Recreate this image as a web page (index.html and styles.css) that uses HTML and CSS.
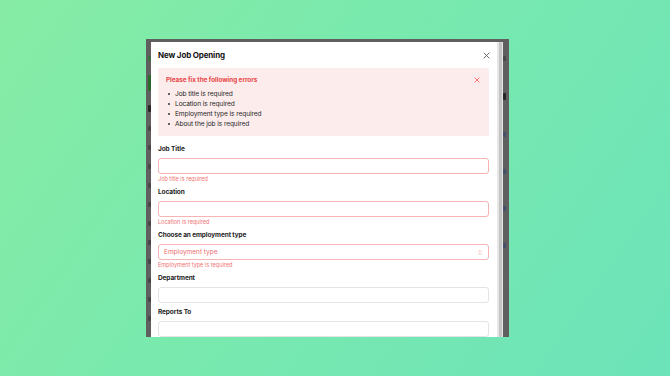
FILE: index.html
```html
<!DOCTYPE html>
<html lang="en">
<head>
<meta charset="utf-8">
<title>New Job Opening</title>
<link rel="stylesheet" href="styles.css">
</head>
<body>
<div class="stage">
  <div class="frame">
    <div class="backdrop-strip left">
      <span class="frag s1 g"></span>
      <span class="frag btn"></span>
      <span class="frag s2 b"></span>
      <span class="frag s1"></span>
      <span class="frag s1"></span>
      <span class="frag s1"></span>
      <span class="frag s1"></span>
      <span class="frag s1"></span>
      <span class="frag s1"></span>
      <span class="frag s1"></span>
      <span class="frag s1"></span>
      <span class="frag s1"></span>
      <span class="frag s1"></span>
      <span class="frag s1"></span>
    </div>
    <div class="modal">
      <div class="modal-header">
        <h1 class="modal-title">New Job Opening</h1>
        <svg class="close" viewBox="0 0 10 10" width="7" height="7"><path d="M1 1L9 9M9 1L1 9" stroke="#5b5b5b" stroke-width="1.3" fill="none"/></svg>
      </div>
      <div class="alert">
        <div class="alert-head">
          <span class="alert-title">Please fix the following errors</span>
          <svg class="alert-close" viewBox="0 0 10 10" width="6" height="6"><path d="M1 1L9 9M9 1L1 9" stroke="#ec5b5b" stroke-width="1.4" fill="none"/></svg>
        </div>
        <ul class="alert-list">
          <li>Job title is required</li>
          <li>Location is required</li>
          <li>Employment type is required</li>
          <li>About the job is required</li>
        </ul>
      </div>
      <div class="field">
        <label class="label">Job Title</label>
        <div class="input invalid"></div>
        <div class="err">Job title is required</div>
      </div>
      <div class="field">
        <label class="label">Location</label>
        <div class="input invalid"></div>
        <div class="err">Location is required</div>
      </div>
      <div class="field">
        <label class="label">Choose an employment type</label>
        <div class="input invalid select">
          <span class="placeholder">Employment type</span>
          <svg class="arrows" viewBox="0 0 6 10" width="4" height="7"><path d="M1 4L3 2L5 4M1 6L3 8L5 6" stroke="#ef8a8a" stroke-width="1" fill="none"/></svg>
        </div>
        <div class="err">Employment type is required</div>
      </div>
      <div class="field">
        <label class="label">Department</label>
        <div class="input"></div>
      </div>
      <div class="field">
        <label class="label">Reports To</label>
        <div class="input"></div>
      </div>
    </div>
    <div class="scrollbar"><div class="thumb"></div></div>
    <div class="backdrop-strip right">
      <span class="frag s1"></span>
      <span class="frag s2 b"></span>
      <span class="frag s1 lnk"></span>
      <span class="frag s1 lnk"></span>
      <span class="frag s1 lnk"></span>
      <span class="frag s1 lnk"></span>
    </div>
  </div>
</div>
</body>
</html>
```
FILE: styles.css
```css
* { box-sizing: border-box; margin: 0; padding: 0; }
html, body { width: 670px; height: 376px; overflow: hidden; }
body {
  font-family: "Inter", "Liberation Sans", sans-serif;
  background: linear-gradient(125deg, #86eca5 0%, #79e9ae 45%, #6ce3b9 100%);
}
.stage {
  padding: 39px 0 0 146px;
}
.frame {
  width: 363px;
  height: 298px;
  background: #5f5f5f;
  display: flex;
  padding-top: 3px;
  overflow: hidden;
}
.backdrop-strip {
  width: 5px;
  display: flex;
  flex-direction: column;
  gap: 14px;
  padding-top: 14px;
  overflow: hidden;
  flex: none;
}
.backdrop-strip.left { align-items: flex-end; }
.backdrop-strip.right { width: 6px; padding-top: 14px; gap: 32px; }
.frag { display: block; height: 5px; width: 3px; background: #474747; border-radius: 1px; }
.frag.s2 { height: 7px; width: 3px; }
.frag.g { background: #3d6e3d; }
.frag.btn { width: 3px; height: 16px; background: #2c6a2c; }
.frag.b { background: #262626; }
.frag.lnk { background: #44506a; }
.modal {
  width: 346px;
  background: #fff;
  padding: 0 8px 0 7px;
  overflow: hidden;
  flex: none;
}
.modal-header {
  display: flex;
  align-items: center;
  justify-content: space-between;
  height: 26px;
}
.modal-title {
  font-size: 8px;
  font-weight: 700;
  color: #141414;
  letter-spacing: -0.15px;
}
.close { display: block; margin-right: -1px; }
.alert {
  background: #fcecec;
  border-radius: 2px;
  padding: 7px 8px 7px 8px;
  height: 68px;
}
.alert-head {
  display: flex;
  align-items: center;
  justify-content: space-between;
  height: 10px;
  padding-right: 1px;
}
.alert-title {
  font-size: 6.4px;
  font-weight: 700;
  color: #e94848;
  letter-spacing: -0.05px;
}
.alert-list {
  list-style: none;
  margin-top: 4px;
  padding-left: 2px;
  font-size: 6.6px;
  color: #262626;
  line-height: 10px;
  letter-spacing: -0.1px;
}
.alert-list li { display: flex; align-items: center; }
.alert-list li::before {
  content: "";
  width: 2px;
  height: 2px;
  border-radius: 50%;
  background: #333;
  margin-right: 5px;
  flex: none;
}
.field { margin-top: 8px; }
.field + .field { margin-top: 4px; }
.label {
  display: block;
  font-size: 6.5px;
  font-weight: 700;
  color: #1e1e1e;
  line-height: 10px;
  margin-bottom: 4px;
  letter-spacing: -0.1px;
}
.input {
  height: 16px;
  border: 1px solid #e4e4e4;
  border-radius: 3px;
  background: #fff;
}
.input.invalid { border-color: #f5b3b3; }
.select {
  display: flex;
  align-items: center;
  justify-content: space-between;
  padding: 0 6px 0 5px;
}
.placeholder { font-size: 6.5px; color: #ef6e6e; }
.arrows { display: block; }
.err {
  margin-top: 1px;
  font-size: 5.5px;
  line-height: 8px;
  color: #f27070;
}
.scrollbar {
  width: 6px;
  background: #e6e6e6;
  padding: 0 1px;
  flex: none;
}
.thumb {
  width: 3px;
  margin-left: 1px;
  height: 100%;
  background: #c4c4c4;
  border-radius: 2px;
}
```
